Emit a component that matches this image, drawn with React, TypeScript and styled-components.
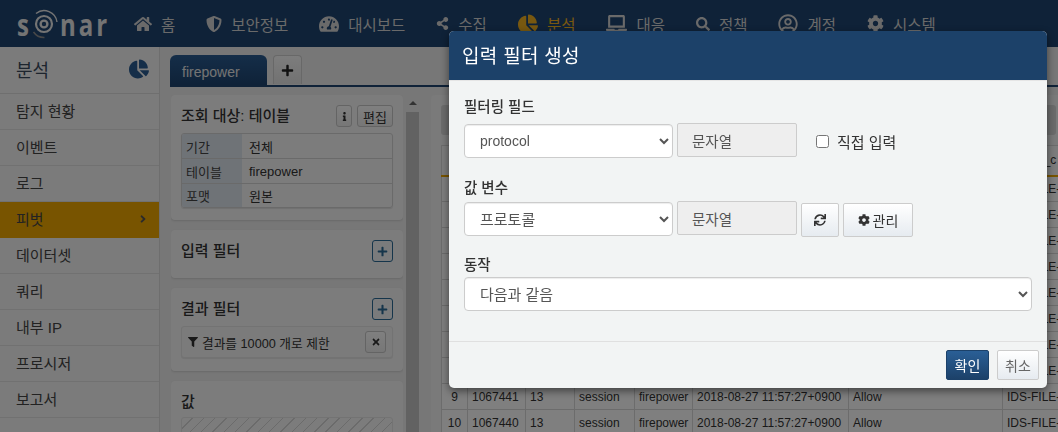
import * as React from "react";
import styled, { createGlobalStyle } from "styled-components";
import {
  FaHome,
  FaShieldAlt,
  FaTachometerAlt,
  FaShareAlt,
  FaChartPie,
  FaLaptop,
  FaSearch,
  FaRegUserCircle,
  FaCog,
  FaPlus,
  FaInfo,
  FaTimes,
  FaFilter,
  FaSync,
  FaAngleRight,
} from "react-icons/fa";

const FONT = `"Liberation Sans", "Noto Sans CJK KR", sans-serif`;

const GlobalStyle = createGlobalStyle`
  html, body {
    margin: 0;
    height: 100%;
    overflow: hidden;
    font-family: ${FONT};
    font-size: 14px;
    color: #333;
    background: #eeeeee;
  }
  * { box-sizing: border-box; }
`;

const Page = styled.div`
  width: 1058px;
  height: 432px;
  display: flex;
  flex-direction: column;
  overflow: hidden;
`;

const TopBar = styled.header`
  height: 47px;
  flex-shrink: 0;
  background: #1e4470;
  display: flex;
  align-items: center;
  padding-left: 17px;
`;

const Logo = styled.div`
  display: flex;
  align-items: center;
  width: 117px;
  color: #e8e8e8;
`;

const LogoText = styled.span`
  font-family: "Open Sans", sans-serif;
  font-size: 24px;
  font-weight: 700;
  letter-spacing: 3px;
  line-height: 1;
  transform: scaleY(1.28);
`;

const LogoMark = styled.svg`
  margin: 0 2px 0 -1px;
  flex-shrink: 0;
`;

const NavList = styled.nav`
  display: flex;
  align-items: center;
  gap: 31px;
`;

const NavItem = styled.div<{ $active?: boolean }>`
  display: flex;
  align-items: center;
  gap: 9px;
  font-size: 15.5px;
  color: ${p => (p.$active ? "#f0b020" : "#d4d4d4")};
  white-space: nowrap;
  svg { display: block; }
`;

const Body = styled.div`
  flex: 1;
  display: flex;
  min-height: 0;
`;

const Sidebar = styled.aside`
  width: 160px;
  flex-shrink: 0;
  background: #f6f6f6;
  border-right: 1px solid #dcdcdc;
`;

const SideTitle = styled.div`
  height: 47px;
  padding: 0 10px 2px 16px;
  display: flex;
  align-items: center;
  justify-content: space-between;
  font-size: 18px;
  color: #3a4a5c;
  border-bottom: 1px solid #dedede;
  svg { color: #2a5c92; }
`;

const SideItem = styled.div<{ $active?: boolean }>`
  height: 36px;
  padding: 0 10px 2px 16px;
  display: flex;
  align-items: center;
  justify-content: space-between;
  font-size: 15px;
  color: #444;
  border-bottom: 1px solid ${p => (p.$active ? "transparent" : "#e2e2e2")};
  background: ${p => (p.$active ? "#f0a800" : "transparent")};
`;

const Main = styled.main`
  flex: 1;
  min-width: 0;
  display: flex;
  flex-direction: column;
  padding: 8px 0 0 10px;
`;

const TabBar = styled.div`
  height: 32px;
  flex-shrink: 0;
  display: flex;
  gap: 6px;
  border-bottom: 2px solid #1e4470;
`;

const Tab = styled.div`
  width: 97px;
  padding: 3px 0 0 12px;
  display: flex;
  align-items: center;
  border-radius: 6px 6px 0 0;
  background: linear-gradient(#2a5c92, #1e4470);
  color: #e8e8e8;
  font-size: 14px;
`;

const AddTab = styled.div`
  width: 29px;
  margin-bottom: 1px;
  display: flex;
  align-items: center;
  justify-content: center;
  border: 1px solid #d0d0d0;
  border-bottom: 0;
  border-radius: 4px 4px 0 0;
  background: linear-gradient(#fafafa, #e4e4e4);
  color: #222;
`;

const Content = styled.div`
  flex: 1;
  min-height: 0;
  display: flex;
  padding: 8px 0 0 1px;
`;

const LeftColumn = styled.div`
  width: 232px;
  flex-shrink: 0;
  display: flex;
  flex-direction: column;
  gap: 10px;
  overflow: hidden;
`;

const Card = styled.section<{ $tail?: number }>`
  background: #f9f9f9;
  border-radius: 4px;
  box-shadow: 0 1px 2px rgba(0, 0, 0, 0.12);
  padding: 10px 10px ${p => p.$tail ?? 12}px;
  flex-shrink: 0;
`;

const CardHead = styled.div`
  display: flex;
  align-items: center;
  justify-content: space-between;
  height: 22px;
`;

const CardTitle = styled.h3`
  margin: -3px 0 0;
  font-size: 15px;
  font-weight: 500;
  color: #333;
`;

const HeadButtons = styled.div`
  display: flex;
  gap: 5px;
`;

const SmallButton = styled.button<{ $w: number }>`
  width: ${p => p.$w}px;
  height: 22px;
  padding: 0;
  display: flex;
  align-items: center;
  justify-content: center;
  border: 1px solid #c8c8c8;
  border-radius: 3px;
  background: linear-gradient(#fff, #eee);
  color: #333;
  font-family: ${FONT};
  font-size: 13px;
`;

const PlusButton = styled.button`
  width: 21px;
  height: 22px;
  padding: 0;
  display: flex;
  align-items: center;
  justify-content: center;
  border: 1px solid #2a6a96;
  border-radius: 3px;
  background: #f4f6f8;
  color: #2a6a96;
`;

const InfoTable = styled.div`
  margin-top: 6px;
  border: 1px solid #d4d4d4;
  border-radius: 3px;
  box-shadow: 0 1px 1px rgba(0, 0, 0, 0.1);
  overflow: hidden;
`;

const InfoRow = styled.div`
  display: grid;
  grid-template-columns: 60px 1fr;
  height: 24.4px;
  font-size: 13px;
  & + & { border-top: 1px solid #d4d4d4; }
`;

const InfoKey = styled.div`
  background: #dfe6ee;
  padding: 0 4px;
  display: flex;
  align-items: center;
  color: #444;
`;

const InfoValue = styled.div`
  padding: 0 7px;
  display: flex;
  align-items: center;
`;

const FilterRow = styled.div`
  margin-top: 6px;
  height: 32px;
  padding: 0 6px;
  display: flex;
  align-items: center;
  justify-content: space-between;
  background: #f6f6f6;
  border: 1px solid #e6e6e6;
  border-radius: 3px;
  box-shadow: 0 1px 1px rgba(0, 0, 0, 0.08);
  font-size: 12.7px;
`;

const FilterText = styled.span`
  display: flex;
  align-items: center;
  gap: 4px;
`;

const Hatched = styled.div`
  margin-top: 4px;
  height: 60px;
  border: 1px solid #e6e6e6;
  border-radius: 3px;
  background: repeating-linear-gradient(135deg, #f8f8f8 0 7px, #d6d6d6 7px 8px);
`;

const ScrollBar = styled.div`
  width: 13px;
  margin: 0 0 0 3px;
  flex-shrink: 0;
  display: flex;
  flex-direction: column;
  align-items: center;
`;

const ScrollArrow = styled.div`
  height: 17px;
  padding-top: 6px;
  &::before {
    content: "";
    display: block;
    border: 4px solid transparent;
    border-top: 0;
    border-bottom: 4px solid #666;
  }
`;

const ScrollThumb = styled.div`
  flex: 1;
  width: 100%;
  background: #c4c4c4;
`;

const ResultPanel = styled.div`
  flex: 1;
  min-width: 0;
  margin-left: 12px;
  padding: 10px 0 0 10px;
  background: #f4f4f4;
  border-radius: 4px 0 0 0;
  overflow: hidden;
`;

const Toolbar = styled.div`
  height: 30px;
  width: 615px;
  background: #d8d8d8;
  border-radius: 3px;
  margin-bottom: 10px;
`;

const DataTable = styled.table`
  border-collapse: collapse;
  table-layout: fixed;
  width: 760px;
  font-size: 12px;
  color: #333;
  background: #fff;
`;

const Th = styled.th<{ $w: number }>`
  width: ${p => p.$w}px;
  height: 30px;
  padding: 0 4px;
  text-align: left;
  vertical-align: middle;
  font-weight: 400;
  white-space: nowrap;
  overflow: hidden;
  background: #f8f8f8;
  border: 1px solid #d8d8d8;
  border-bottom: 2px solid #f0a800;
`;

const Td = styled.td<{ $center?: boolean }>`
  height: 26px;
  padding: 0 4px;
  text-align: ${p => (p.$center ? "center" : "left")};
  white-space: nowrap;
  overflow: hidden;
  border: 1px solid #d8d8d8;
`;

const Backdrop = styled.div`
  position: fixed;
  inset: 0;
  background: rgba(0, 0, 0, 0.5);
`;

const Modal = styled.div`
  position: fixed;
  left: 449px;
  top: 31px;
  width: 598px;
  height: 357px;
  background: #f2f4f4;
  border-radius: 5px;
  box-shadow: 0 3px 9px rgba(0, 0, 0, 0.5);
  overflow: hidden;
  display: flex;
  flex-direction: column;
`;

const ModalHead = styled.div`
  height: 50px;
  flex-shrink: 0;
  padding: 0 13px 2px;
  display: flex;
  align-items: center;
  background: #1c4169;
  color: #fff;
  font-size: 19px;
  letter-spacing: 0.3px;
  border-bottom: 1px solid #e5e5e5;
`;

const ModalBody = styled.div`
  flex: 1;
  padding: 14px 15px 0;
`;

const FieldLabel = styled.div<{ $gap: number }>`
  height: 20px;
  margin-bottom: ${p => p.$gap}px;
  display: flex;
  align-items: center;
  font-size: 14.5px;
  font-weight: 500;
  color: #333;
`;

const FieldRow = styled.div<{ $gap: number }>`
  display: flex;
  align-items: flex-start;
  margin-bottom: ${p => p.$gap}px;
`;

const Select = styled.select<{ $w: number; $size?: number }>`
  width: ${p => p.$w}px;
  height: 34px;
  padding: 6px 11px;
  background: #fff;
  border: 1px solid #ccc;
  border-radius: 4px;
  box-shadow: inset 0 1px 1px rgba(0, 0, 0, 0.075);
  font-family: ${FONT};
  font-size: ${p => p.$size ?? 14}px;
  color: #555;
`;

const TypeBox = styled.div`
  width: 120px;
  height: 34px;
  margin: -1px 0 0 4px;
  padding: 0 14px;
  display: flex;
  align-items: center;
  background: #eeeeee;
  border: 1px solid #ccc;
  border-radius: 2px;
  font-size: 14.5px;
  color: #555;
`;

const CheckLabel = styled.label`
  margin: 0 0 0 19px;
  height: 34px;
  display: flex;
  align-items: center;
  gap: 8px;
  font-size: 15px;
  color: #333;
  input { margin: 0; width: 13px; height: 13px; }
`;

const GhostButton = styled.button<{ $w?: number }>`
  width: ${p => p.$w ?? 42}px;
  height: 34px;
  padding: 0;
  display: flex;
  align-items: center;
  justify-content: center;
  gap: 3px;
  background: linear-gradient(#fff, #e6ebf0);
  border: 1px solid #ccc;
  border-radius: 2px;
  font-family: ${FONT};
  font-size: 14px;
  color: #333;
`;

const RowButton = styled(GhostButton)`
  margin: 1px 0 0 4px;
`;

const ModalFoot = styled.div`
  height: 47px;
  flex-shrink: 0;
  padding: 8px 8px 0 0;
  display: flex;
  justify-content: flex-end;
  gap: 8px;
  border-top: 1px solid #e0e0e0;
`;

const ConfirmButton = styled.button`
  width: 43px;
  height: 30px;
  padding: 0;
  background: linear-gradient(#2a5f96, #1c4169);
  border: 1px solid #1c4169;
  border-radius: 2px;
  color: #fff;
  font-family: ${FONT};
  font-size: 14px;
`;

const CancelButton = styled(GhostButton)`
  height: 30px;
  color: #666;
`;

const navItems = [
  { icon: <FaHome size={18} />, label: "홈" },
  { icon: <FaShieldAlt size={16} />, label: "보안정보" },
  { icon: <FaTachometerAlt size={20} />, label: "대시보드" },
  { icon: <FaShareAlt size={13} />, label: "수집" },
  { icon: <FaChartPie size={20} />, label: "분석", active: true },
  { icon: <FaLaptop size={21} />, label: "대응" },
  { icon: <FaSearch size={14} />, label: "정책" },
  { icon: <FaRegUserCircle size={20} />, label: "계정" },
  { icon: <FaCog size={17} />, label: "시스템" },
];

const sideItems = ["탐지 현황", "이벤트", "로그", "피벗", "데이터셋", "쿼리", "내부 IP", "프로시저", "보고서"];

const columns = [26, 58, 49, 60, 58, 156, 154, 200];

export default function App() {
  const rows = Array.from({ length: 10 }, (_, i) => i);
  return (
    <Page>
      <GlobalStyle />
      <TopBar>
        <Logo>
          <LogoText>s</LogoText>
          <LogoMark width="27" height="30" viewBox="0 0 27 30" fill="none">
            <circle cx="13" cy="15" r="3.4" stroke="#e8e8e8" strokeWidth="2.4" />
            <circle cx="13" cy="15" r="8" stroke="#e8e8e8" strokeWidth="2.2" />
            <path d="M5 4.5A13 13 0 0 1 26 13" stroke="#e8e8e8" strokeWidth="1.4" />
            <path d="M2.5 23a13 13 0 0 0 11 5.5" stroke="#8f8f8f" strokeWidth="1.6" />
          </LogoMark>
          <LogoText>nar</LogoText>
        </Logo>
        <NavList>
          {navItems.map(item => (
            <NavItem key={item.label} $active={item.active}>
              {item.icon}
              {item.label}
            </NavItem>
          ))}
        </NavList>
      </TopBar>
      <Body>
        <Sidebar>
          <SideTitle>
            분석
            <FaChartPie size={20} />
          </SideTitle>
          {sideItems.map(label => (
            <SideItem key={label} $active={label === "피벗"}>
              {label}
              {label === "피벗" && <FaAngleRight size={12} color="#555" />}
            </SideItem>
          ))}
        </Sidebar>
        <Main>
          <TabBar>
            <Tab>firepower</Tab>
            <AddTab>
              <FaPlus size={13} />
            </AddTab>
          </TabBar>
          <Content>
            <LeftColumn>
              <Card>
                <CardHead>
                  <CardTitle>조회 대상: 테이블</CardTitle>
                  <HeadButtons>
                    <SmallButton $w={16}>
                      <FaInfo size={9} />
                    </SmallButton>
                    <SmallButton $w={36}>편집</SmallButton>
                  </HeadButtons>
                </CardHead>
                <InfoTable>
                  <InfoRow>
                    <InfoKey>기간</InfoKey>
                    <InfoValue>전체</InfoValue>
                  </InfoRow>
                  <InfoRow>
                    <InfoKey>테이블</InfoKey>
                    <InfoValue>firepower</InfoValue>
                  </InfoRow>
                  <InfoRow>
                    <InfoKey>포맷</InfoKey>
                    <InfoValue>원본</InfoValue>
                  </InfoRow>
                </InfoTable>
              </Card>
              <Card $tail={16}>
                <CardHead>
                  <CardTitle>입력 필터</CardTitle>
                  <PlusButton>
                    <FaPlus size={11} />
                  </PlusButton>
                </CardHead>
              </Card>
              <Card $tail={13}>
                <CardHead>
                  <CardTitle>결과 필터</CardTitle>
                  <PlusButton>
                    <FaPlus size={11} />
                  </PlusButton>
                </CardHead>
                <FilterRow>
                  <FilterText>
                    <FaFilter size={10} />
                    결과를 10000 개로 제한
                  </FilterText>
                  <SmallButton $w={21}>
                    <FaTimes size={10} />
                  </SmallButton>
                </FilterRow>
              </Card>
              <Card>
                <CardHead>
                  <CardTitle>값</CardTitle>
                </CardHead>
                <Hatched />
              </Card>
            </LeftColumn>
            <ScrollBar>
              <ScrollArrow />
              <ScrollThumb />
            </ScrollBar>
            <ResultPanel>
              <Toolbar />
              <DataTable>
                <thead>
                  <tr>
                    {columns.map((w, i) => (
                      <Th key={i} $w={w}>
                        {i === 7 ? "reason_c" : ""}
                      </Th>
                    ))}
                  </tr>
                </thead>
                <tbody>
                  {rows.map(i => (
                    <tr key={i}>
                      <Td $center>{i + 1}</Td>
                      <Td>{1067449 - i}</Td>
                      <Td>13</Td>
                      <Td>session</Td>
                      <Td>firepower</Td>
                      <Td>2018-08-27 11:57:27+0900</Td>
                      <Td>Allow</Td>
                      <Td>IDS-FILE-PDF</Td>
                    </tr>
                  ))}
                </tbody>
              </DataTable>
            </ResultPanel>
          </Content>
        </Main>
      </Body>
      <Backdrop />
      <Modal>
        <ModalHead>입력 필터 생성</ModalHead>
        <ModalBody>
          <FieldLabel $gap={9}>필터링 필드</FieldLabel>
          <FieldRow $gap={18}>
            <Select $w={209} defaultValue="protocol">
              <option>protocol</option>
            </Select>
            <TypeBox>문자열</TypeBox>
            <CheckLabel>
              <input type="checkbox" />
              직접 입력
            </CheckLabel>
          </FieldRow>
          <FieldLabel $gap={6}>값 변수</FieldLabel>
          <FieldRow $gap={16}>
            <Select $w={209} $size={15} defaultValue="프로토콜">
              <option>프로토콜</option>
            </Select>
            <TypeBox>문자열</TypeBox>
            <RowButton $w={38}>
              <FaSync size={12} />
            </RowButton>
            <RowButton $w={70}>
              <FaCog size={12} />
              관리
            </RowButton>
          </FieldRow>
          <FieldLabel $gap={4}>동작</FieldLabel>
          <FieldRow $gap={0}>
            <Select $w={568} $size={15} defaultValue="다음과 같음">
              <option>다음과 같음</option>
            </Select>
          </FieldRow>
        </ModalBody>
        <ModalFoot>
          <ConfirmButton>확인</ConfirmButton>
          <CancelButton $w={42}>취소</CancelButton>
        </ModalFoot>
      </Modal>
    </Page>
  );
}
